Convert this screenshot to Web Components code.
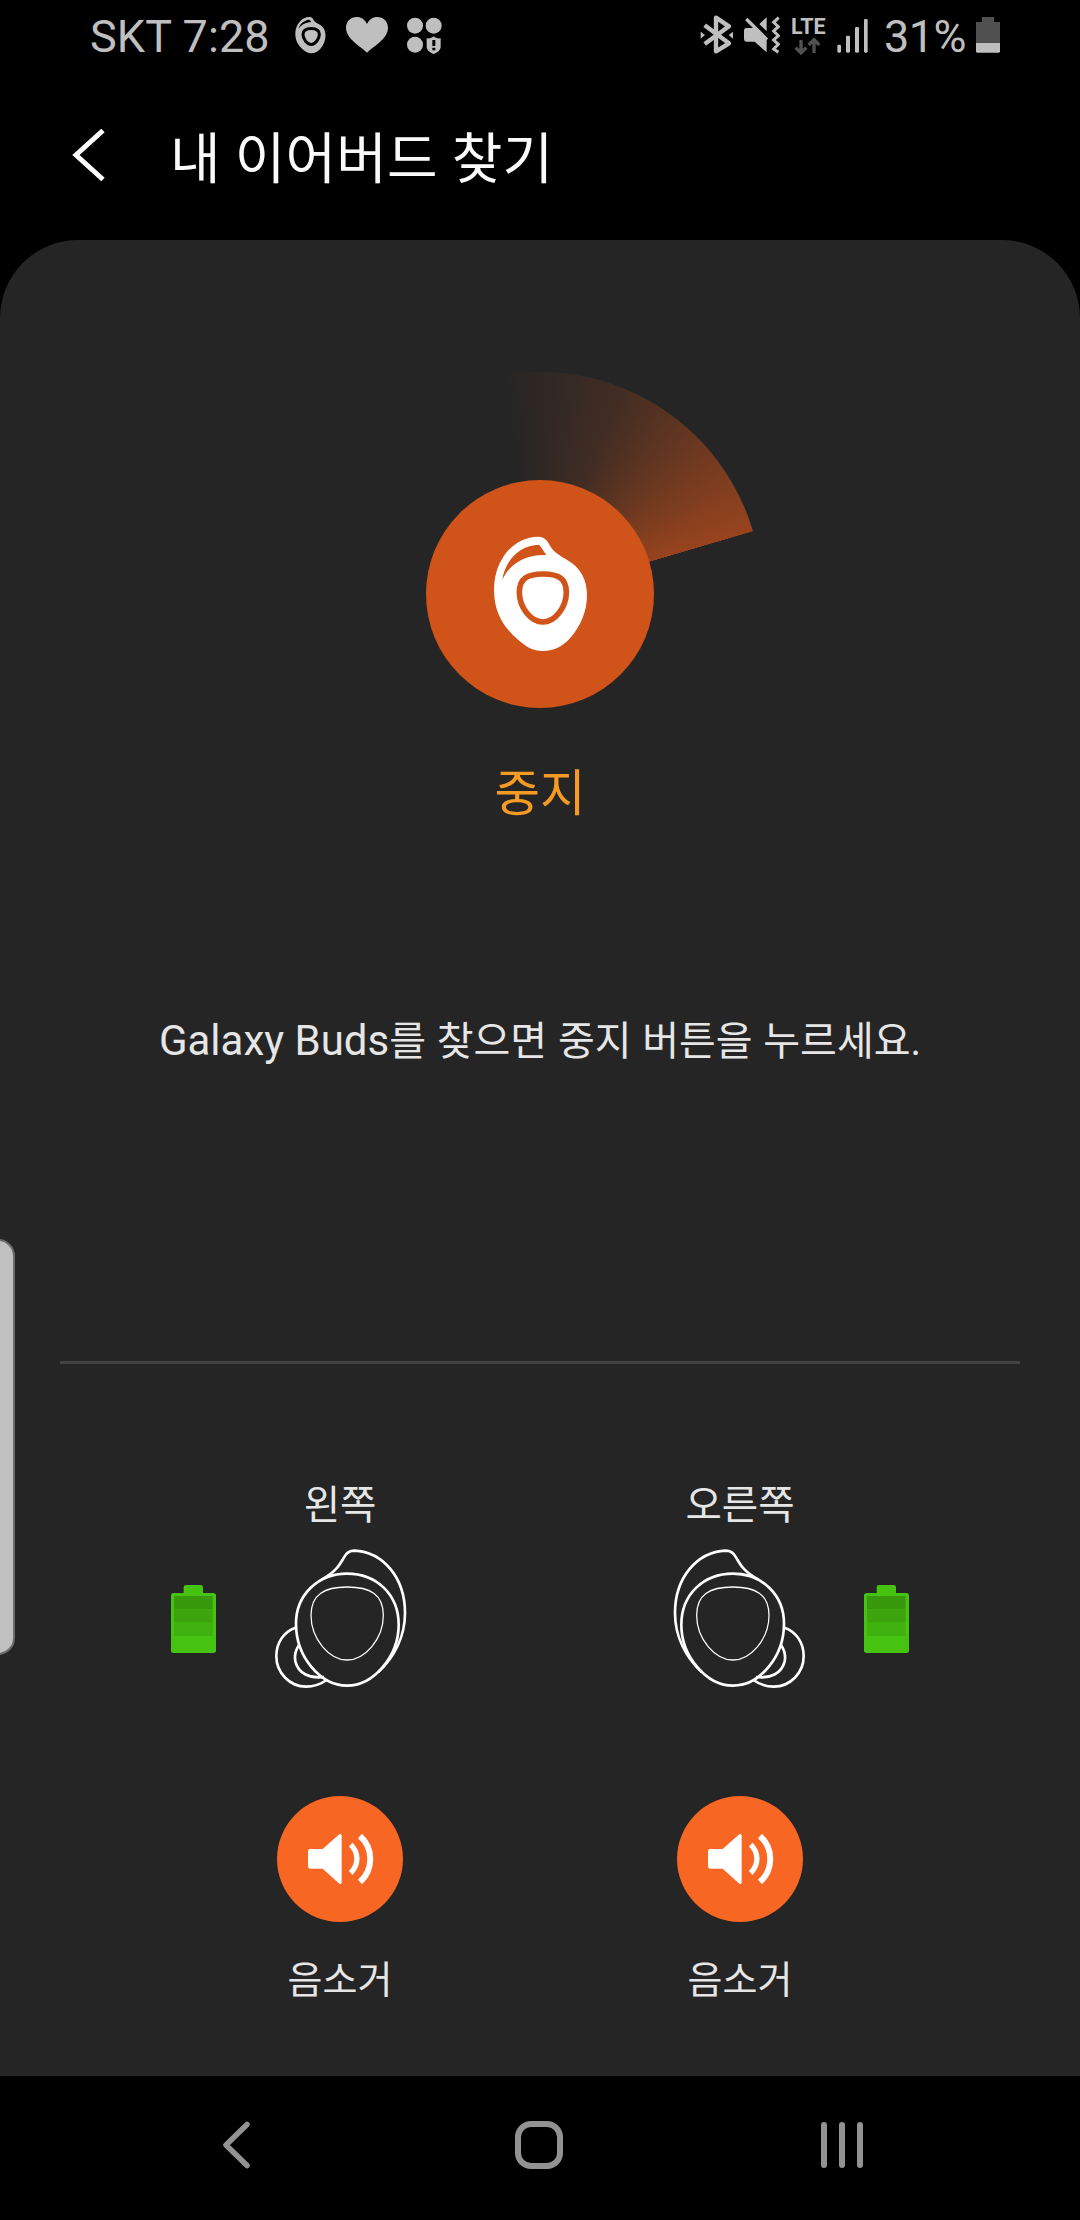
<!DOCTYPE html>
<html lang="ko">
<head>
<meta charset="utf-8">
<title>내 이어버드 찾기</title>
<style>
html,body{margin:0;background:#000}
body{width:1080px;height:2220px;overflow:hidden;font-family:Roboto,"Noto Sans CJK KR",sans-serif}
</style>
</head>
<body>
<find-buds-app></find-buds-app>
<script>
const define=(name,html)=>{
  const t=document.createElement('template');
  t.innerHTML=html;
  customElements.define(name,class extends HTMLElement{
    constructor(){super();this.attachShadow({mode:'open'}).append(t.content.cloneNode(true));}
  });
};

define('status-bar',`<style>
:host{display:flex;justify-content:space-between;height:72px;padding:0 80px 0 90px;color:#bfbfbf;font-size:45px;line-height:73px;white-space:pre}
div{display:flex}
svg{display:block;height:72px;fill:#bfbfbf}
.time{width:205px;letter-spacing:.1px}
.heart{margin:0 18px 0 20px}
.mute{margin:0 11px 0 10px}
.net{display:flex;flex-direction:column;width:35px;font-size:21.5px;font-weight:700;line-height:20px;padding-top:17px;margin-right:11px}
.net svg{height:18px}
.pct{width:92px;margin-left:15px;letter-spacing:-.6px}
</style>
<div>
 <span class="time">SKT 7:28</span>
 <svg width="31" viewBox="0 0 93 216"><g transform="translate(-22.5 25.5) scale(.325 .317)">
  <path fill-rule="evenodd" d="M205 80C225 80 232 92 245 115C252 125 270 138 295 152C330 172 351 208 351 255C351 300 335 345 300 385C275 412 250 423 218 423C190 423 170 412 145 390C100 352 72 305 72 240C72 150 130 80 205 80ZM100 195C110 150 150 110 203 106L220 128C170 132 125 155 100 195Z"/>
  <path d="M219 190C266 190 294 204 294 247C294 292 255 340 219 340C182 340 143 292 143 247C143 204 172 190 219 190Z" fill="none" stroke="#000" stroke-width="28"/></g></svg>
 <svg class="heart" width="42" viewBox="858 0 126 216"><path d="M921 158C908 143 858 118 858 84C858 64 872 51 890 51C904 51 915 59 921 72C927 59 938 51 952 51C970 51 984 64 984 84C984 118 934 143 921 158Z"/></svg>
 <svg width="36" viewBox="1038 0 108 216"><circle cx="1065" cy="77" r="24"/><circle cx="1121" cy="77" r="24"/><circle cx="1065" cy="134" r="24"/><path d="M1100 115C1110 116 1115 114 1121 109C1127 114 1132 116 1142 115V140C1142 150 1132 158 1121 162C1110 158 1100 150 1100 140Z"/><path d="M1117 120H1126V138H1117ZM1117 143H1126V151H1117Z" fill="#000"/></svg>
</div>
<div>
 <svg width="34" viewBox="59 0 102 216"><path d="M73 76L146 130L107 154V53L146 79L73 132" fill="none" stroke="#bfbfbf" stroke-width="13" stroke-linejoin="round"/><path d="M61 95L74 105L61 116ZM158 95L145 105L158 116Z"/></svg>
 <svg class="mute" width="36" viewBox="192 0 108 216"><path d="M199 84H228L260 116V157L224 125H199Q192 125 192 118V91Q192 84 199 84ZM238 72L260 52V94Z"/><path d="M199 57L261 119" fill="none" stroke="#bfbfbf" stroke-width="10"/><path d="M296 53L281 67L295 80L281 93L295 107L281 120L295 133L281 147L295 157" fill="none" stroke="#bfbfbf" stroke-width="9"/></svg>
 <span class="net"><span>LTE</span><svg width="35" viewBox="333 113 105 54"><path d="M363 122V160M347 145L363 161L379 145M402 161V122M386 137L402 121L418 137" fill="none" stroke="#505050" stroke-width="10"/></svg></span>
 <svg width="32" viewBox="472 0 96 216"><rect x="473" y="134" width="11" height="24" rx="4"/><rect x="499" y="107" width="12" height="51" rx="4"/><rect x="526" y="81" width="12" height="77" rx="4"/><rect x="553" y="57" width="11" height="101" rx="4"/></svg>
 <span class="pct">31%</span>
 <svg width="24" viewBox="888 0 72 216"><path d="M906 51H942V66H960V130H888V66H906Z" fill="#505050"/><path d="M888 129H960V154Q960 158 956 158H892Q888 158 888 154Z"/></svg>
</div>`);

define('page-header',`<style>
:host{display:flex;align-items:center;height:168px;padding-left:72px;color:#fafafa;font-size:55px}
svg{display:block;width:34px;height:54px;margin-right:64px}
h1{margin:5px 0 0;font:inherit;line-height:80px;white-space:nowrap;letter-spacing:.2px}
</style>
<svg viewBox="0 0 34 54"><path d="M31 1.5L4 26L31 50.5" fill="none" stroke="#fff" stroke-width="5"/></svg><h1><slot></slot></h1>`);

define('search-radar',`<style>
:host{display:flex;flex-direction:column;align-items:center}
.sweep{box-sizing:border-box;width:444px;height:336px;padding:108px 108px 0;clip-path:circle(222px at 222px 222px);background:conic-gradient(from -10deg at 222px 222px,rgba(208,83,26,0) 0deg,rgba(208,83,26,.17) 32deg,rgba(208,83,26,.67) 83.5deg,transparent 83.65deg)}
svg{display:block;width:228px;height:228px;border-radius:50%;background:#d0531a}
.label{margin-top:56px;font-size:49.5px;line-height:60px;color:#f59a23}
</style>
<div class="sweep"><svg viewBox="-132 -90 684 684">
<path fill="#fff" fill-rule="evenodd" d="M205 80C225 80 232 92 245 115C252 125 270 138 295 152C330 172 351 208 351 255C351 300 335 345 300 385C275 412 250 423 218 423C190 423 170 412 145 390C100 352 72 305 72 240C72 150 130 80 205 80ZM97 210C105 150 150 105 207 104C213 110 220 122 229 135C170 132 118 160 97 210Z"/>
<path d="M219 192C266 192 289 206 289 247C289 292 255 336 219 336C182 336 148 292 148 247C148 206 172 192 219 192Z" fill="none" stroke="#d0531a" stroke-width="17"/></svg></div>
<div class="label"><slot></slot></div>`);

define('bud-battery',`<style>:host{display:block;width:45px;height:68px}svg{display:block}</style>
<svg width="45" height="68" viewBox="63 375 135 204"><path d="M101 402V382Q101 375 108 375H152Q159 375 159 382V402Z" fill="#46c210"/><rect x="63" y="399" width="135" height="180" rx="8" fill="#46c210"/><path d="M72 408H188V448H72Z" fill="#39990c"/><path d="M72 448H188V488H72Z" fill="#3ca50e"/><path d="M72 488H188V528H72Z" fill="#40b210"/></svg>`);

define('bud-outline',`<style>:host{display:block;width:136px;height:142px}svg{display:block}:host([side=right]) svg{transform:scaleX(-1)}</style>
<svg width="136" height="142" viewBox="366 262 408 426" fill="none" stroke="#fff" stroke-width="8">
<path d="M591 342C680 342 746 405 746 495C746 590 670 678 591 678C510 678 438 590 438 492C438 405 505 342 591 342Z"/>
<path d="M591 382C660 382 700 403 700 467C700 540 643 601 591 601C540 601 483 540 483 467C483 403 525 382 591 382Z" stroke-width="3.8"/>
<path d="M515 360C560 334 567 318 582 293C590 278 598 273 613 273C700 277 765 355 765 460C765 530 733 592 685 637"/>
<path d="M436 504C400 517 379 550 379 590C379 640 420 681 468 681C490 681 510 675 530 661"/>
<path d="M447 556C436 572 433 590 436 605C445 642 480 658 522 652"/></svg>`);

define('mute-button',`<style>
:host{display:flex;flex-direction:column;align-items:center}
svg{display:block;width:126px;height:126px;border-radius:50%;background:#f86624}
span{margin-top:28px;font-size:38px;line-height:60px;color:#e6e6e6}
</style>
<svg viewBox="51 48 378 378"><path d="M151 207H188L238 163Q245 160 245 168V306Q245 314 238 311L188 266H151Q144 266 144 259V214Q144 207 151 207Z" fill="#fff"/><path d="M272 194C297 218 297 255 272 279" fill="none" stroke="#fff" stroke-width="16"/><path d="M300 168C341 205 341 268 300 306" fill="none" stroke="#fff" stroke-width="18"/></svg>
<span><slot></slot></span>`);

define('bud-side',`<style>
:host{display:flex;flex-direction:column;align-items:center;width:400px}
.name{font-size:39.5px;line-height:60px;color:#e6e6e6}
.row{display:flex;justify-content:center;gap:56px;margin:11px 0 107px}
:host([side=left]) .row{margin-right:101px}
:host([side=right]) .row{margin-left:101px}
</style>
<div class="name"><slot name="name"></slot></div>
<div class="row"><slot></slot></div>
<mute-button><slot name="action"></slot></mute-button>`);

define('find-panel',`<style>
:host{display:block;position:relative;height:1836px;background:#252525;border-radius:78px 78px 0 0}
.body{display:flex;flex-direction:column;align-items:center;padding-top:132px}
p{height:60px;margin:187px 0 290px;font-size:42px;line-height:60px;color:#e6e6e6;white-space:nowrap}
p span{font-size:40px;word-spacing:.8px}
hr{width:960px;height:3px;margin:0 0 112px;border:0;background:#424242}
.sides{display:flex}
bud-battery{margin-top:38px}
.handle{position:absolute;left:-20px;top:999px;box-sizing:border-box;width:35px;height:416px;border:2px solid #6b6b6b;border-radius:17px;background:#c0c0c0}
</style>
<div class="body">
<search-radar>중지</search-radar>
<p>Galaxy Buds<span>를 찾으면 중지 버튼을 누르세요.</span></p>
<hr>
<div class="sides">
<bud-side side="left"><span slot="name">왼쪽</span><bud-battery></bud-battery><bud-outline></bud-outline><span slot="action">음소거</span></bud-side>
<bud-side side="right"><span slot="name">오른쪽</span><bud-outline side="right"></bud-outline><bud-battery></bud-battery><span slot="action">음소거</span></bud-side>
</div></div>
<div class="handle"></div>`);

define('nav-bar',`<style>
:host{display:flex;justify-content:space-between;align-items:center;height:144px;padding:0 215px 6px 220px;box-sizing:border-box}
svg{display:block;width:48px;height:48px;fill:none;stroke:#929292;stroke-width:5.5;stroke-linecap:round;stroke-linejoin:round}
</style>
<svg style="width:32px" viewBox="220 0 32 48"><path d="M247 3.5L226 24L247 44.5"/></svg>
<svg style="margin-left:7px" viewBox="0 0 48 48"><rect x="3" y="3" width="42" height="42" rx="13" stroke-width="6"/></svg>
<svg style="width:46px" viewBox="819 0 46 48"><path d="M824 4V44M842 4V44M860 4V44" stroke-width="6"/></svg>`);

define('find-buds-app',`<style>:host{display:flex;flex-direction:column;width:1080px;height:2220px;background:#000}</style>
<status-bar></status-bar>
<page-header>내 이어버드 찾기</page-header>
<find-panel></find-panel>
<nav-bar></nav-bar>`);
</script>
</body>
</html>
